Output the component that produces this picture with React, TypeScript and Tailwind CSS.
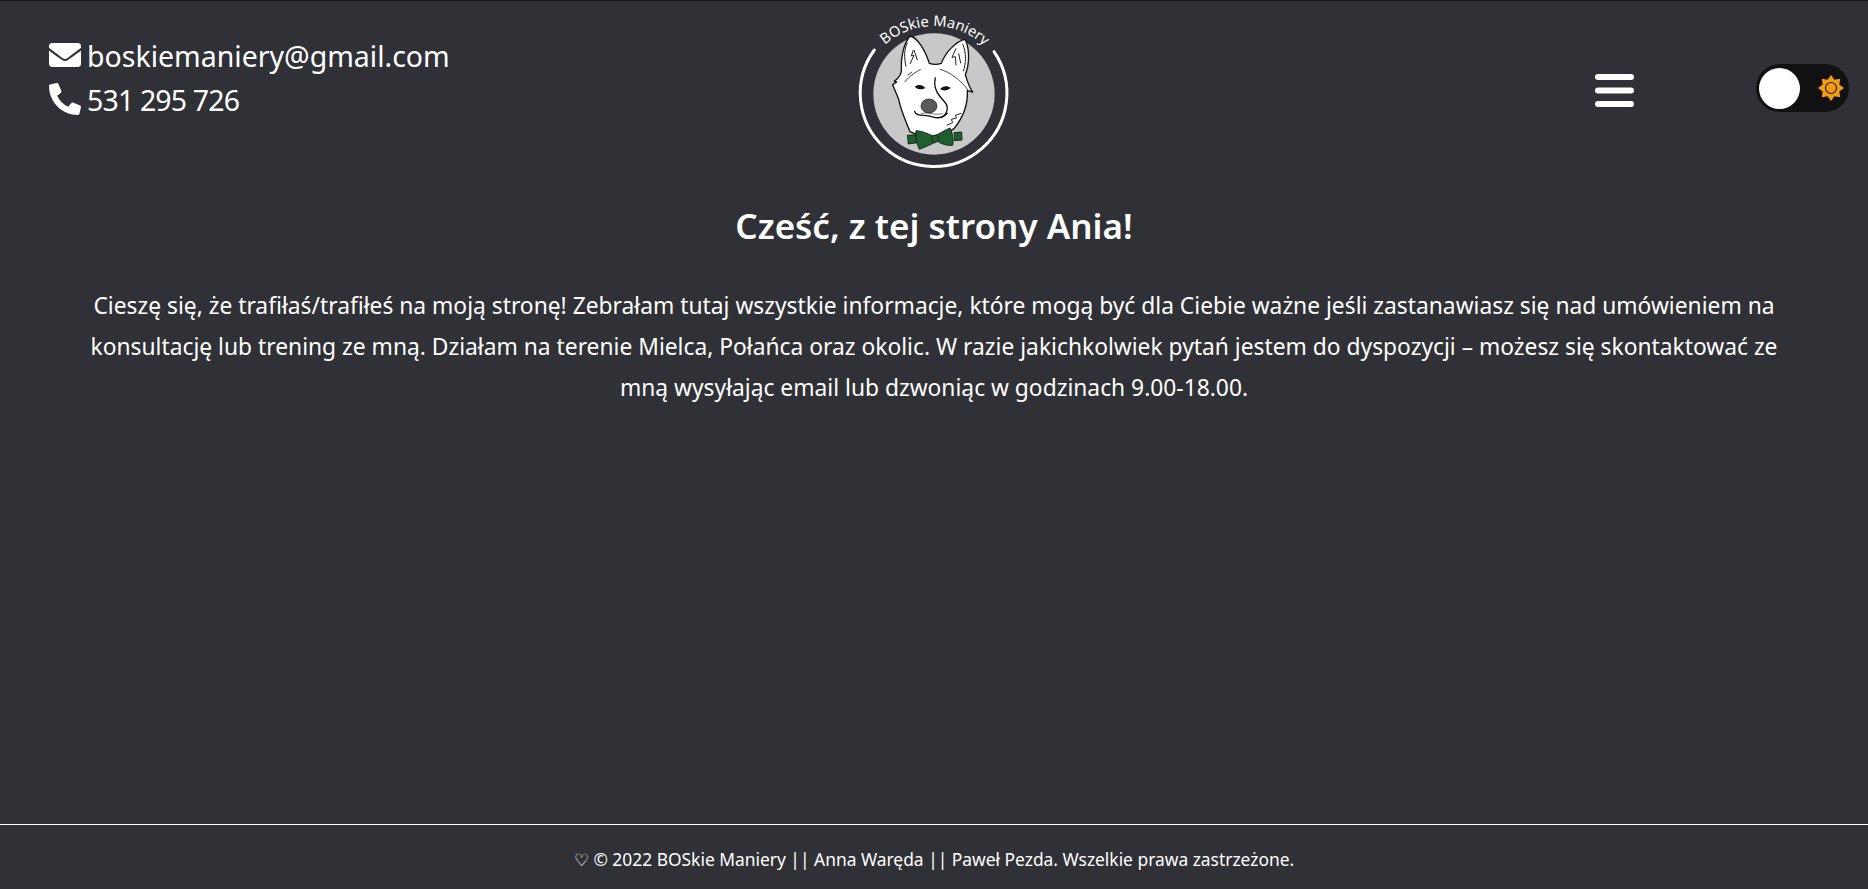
import { FaEnvelope, FaPhoneAlt } from "react-icons/fa";

const font = { fontFamily: '"Noto Sans", sans-serif' };

function Logo() {
  return (
    <svg viewBox="0 0 630 540" className="w-[210px] h-[180px] -mt-px ml-[2px]">
      <defs>
        <path id="arcText" d="M 120 189 A 222 222 0 0 1 504 189" fill="none" />
      </defs>
      <circle cx="312" cy="282" r="182" fill="#c8c8c8" />
      <path d="M 133 150 A 220 220 0 1 0 492 155" fill="none" stroke="#fff" strokeWidth="9" strokeLinecap="round" />
      <text fill="#fff" fontSize="44" fontFamily="'Noto Sans', sans-serif">
        <textPath href="#arcText" startOffset="50.5%" textAnchor="middle">BOSkie Maniery</textPath>
      </text>
      <path
        d="M 240 108 C 262 112 285 150 298 190 C 310 194 322 194 334 190 C 345 160 375 124 405 118 C 418 140 420 190 406 224 C 412 245 418 262 428 276 L 412 272 C 414 310 405 345 372 386 L 310 425 L 240 395 C 226 360 212 330 206 298 L 188 254 L 200 246 L 193 244 C 208 232 216 220 214 208 C 212 170 222 130 240 108 Z"
        fill="#fff"
        stroke="#111"
        strokeWidth="4"
        strokeLinejoin="round"
      />
      <path d="M 232 128 C 222 150 222 170 228 200 M 250 150 L 244 168 L 252 166 L 240 192 M 262 180 L 252 150 M 398 132 C 410 160 408 190 400 214 M 378 145 L 366 172 L 376 170 L 378 196 M 386 160 L 392 190" fill="none" stroke="#222" strokeWidth="3" />
      <path d="M 224 246 C 240 226 258 216 272 208 M 246 216 L 232 226 M 330 208 C 360 216 392 240 414 270" fill="none" stroke="#222" strokeWidth="2.5" />
      <path d="M 316 234 C 308 268 328 288 344 306 C 358 322 352 342 334 352" fill="none" stroke="#111" strokeWidth="4" strokeLinecap="round" />
      <path d="M 254 334 C 258 352 288 342 304 350 C 320 356 340 354 352 340" fill="none" stroke="#111" strokeWidth="4" strokeLinecap="round" />
      <path d="M 272 342 C 285 336 300 340 312 342 C 322 344 332 342 338 340" fill="none" stroke="#333" strokeWidth="2" />
      <path d="M 254 260 C 264 252 278 254 286 264 C 275 271 262 268 254 260 Z M 330 268 C 338 258 352 256 362 264 C 352 273 340 273 330 268 Z" fill="#111" />
      <ellipse cx="297" cy="318" rx="24" ry="21" fill="#5a5a5a" stroke="#111" strokeWidth="2" />
      <path d="M 350 376 L 368 368 L 364 358 L 380 354 L 376 346 L 394 340" fill="none" stroke="#222" strokeWidth="3" />
      <path d="M 232 406 L 258 404 L 262 428 L 235 432 Z M 372 398 L 395 396 L 396 420 L 374 422 Z" fill="#1d5f2e" stroke="#111" strokeWidth="2.5" />
      <path d="M 258 392 C 275 392 295 402 310 408 C 325 404 345 390 360 384 C 368 400 372 420 368 436 C 350 438 335 432 322 424 C 305 432 285 442 268 448 C 260 430 255 410 258 392 Z" fill="#1d5f2e" stroke="#111" strokeWidth="2.5" />
      <path d="M 306 408 C 316 404 322 406 326 410 L 324 424 C 316 428 310 426 306 422 Z" fill="#1d5f2e" stroke="#111" strokeWidth="2" />
    </svg>
  );
}

function Sun() {
  const points = Array.from({ length: 16 }, (_, i) => {
    const a = (i * Math.PI) / 8 - Math.PI / 2;
    const r = i % 2 === 0 ? 13 : 9;
    return `${13 + r * Math.cos(a)},${13 + r * Math.sin(a)}`;
  }).join(" ");
  return (
    <svg viewBox="0 0 26 26" className="w-[26px] h-[26px]">
      <polygon points={points} fill="#f39c12" />
      <circle cx="13" cy="13" r="5.5" fill="#f39c12" stroke="#222" strokeWidth="1.2" />
    </svg>
  );
}

function Bars() {
  return (
    <svg viewBox="0 0 39 33" className="w-[39px] h-[33px] mr-[122px] mt-[5px]" fill="#fff">
      <rect x="0" y="0" width="39" height="6" rx="3" />
      <rect x="0" y="13.5" width="39" height="6" rx="3" />
      <rect x="0" y="27" width="39" height="6" rx="3" />
    </svg>
  );
}

export default function App() {
  return (
    <div style={font} className="min-h-screen flex flex-col bg-[#303136] text-white border-t border-t-[#14161a]">
      <header className="grid grid-cols-3 items-start h-[169px]">
        <div className="pl-[49px] pt-[33px] text-[28.5px] leading-[44px]">
          <div className="flex items-center gap-[6px]">
            <FaEnvelope className="w-[32px] h-[32px] mb-[3px]" />
            <span>boskiemaniery@gmail.com</span>
          </div>
          <div className="flex items-center gap-[6px]">
            <FaPhoneAlt className="w-[32px] h-[32px] mb-[3px]" />
            <span className="tracking-[-0.03em]">531 295 726</span>
          </div>
        </div>
        <div className="flex justify-center">
          <Logo />
        </div>
        <div className="flex items-center justify-end pt-[63px] pr-[19px]">
          <Bars />
          <div className="w-[93px] h-[48px] rounded-full bg-[#111111] flex items-center justify-between pl-[3px] pr-[5px]">
            <div className="w-[41px] h-[41px] rounded-full bg-white" />
            <Sun />
          </div>
        </div>
      </header>
      <main className="flex-1 text-center">
        <h1 className="text-[35px] leading-[46px] font-semibold mt-[33px]">Cześć, z tej strony Ania!</h1>
        <p className="text-[22.8px] leading-[41px] mt-[36px] px-[90px]">
          Cieszę się, że trafiłaś/trafiłeś na moją stronę! Zebrałam tutaj wszystkie informacje, które mogą być dla Ciebie ważne jeśli zastanawiasz się nad umówieniem na konsultację lub trening ze mną. Działam na terenie Mielca, Połańca oraz okolic. W razie jakichkolwiek pytań jestem do dyspozycji – możesz się skontaktować ze mną wysyłając email lub dzwoniąc w godzinach 9.00-18.00.
        </p>
      </main>
      <footer className="h-[65px] pt-[4px] border-t border-t-white flex items-center justify-center text-[17.4px]">
        ♡ © 2022 BOSkie Maniery || Anna Waręda || Paweł Pezda. Wszelkie prawa zastrzeżone.
      </footer>
    </div>
  );
}
